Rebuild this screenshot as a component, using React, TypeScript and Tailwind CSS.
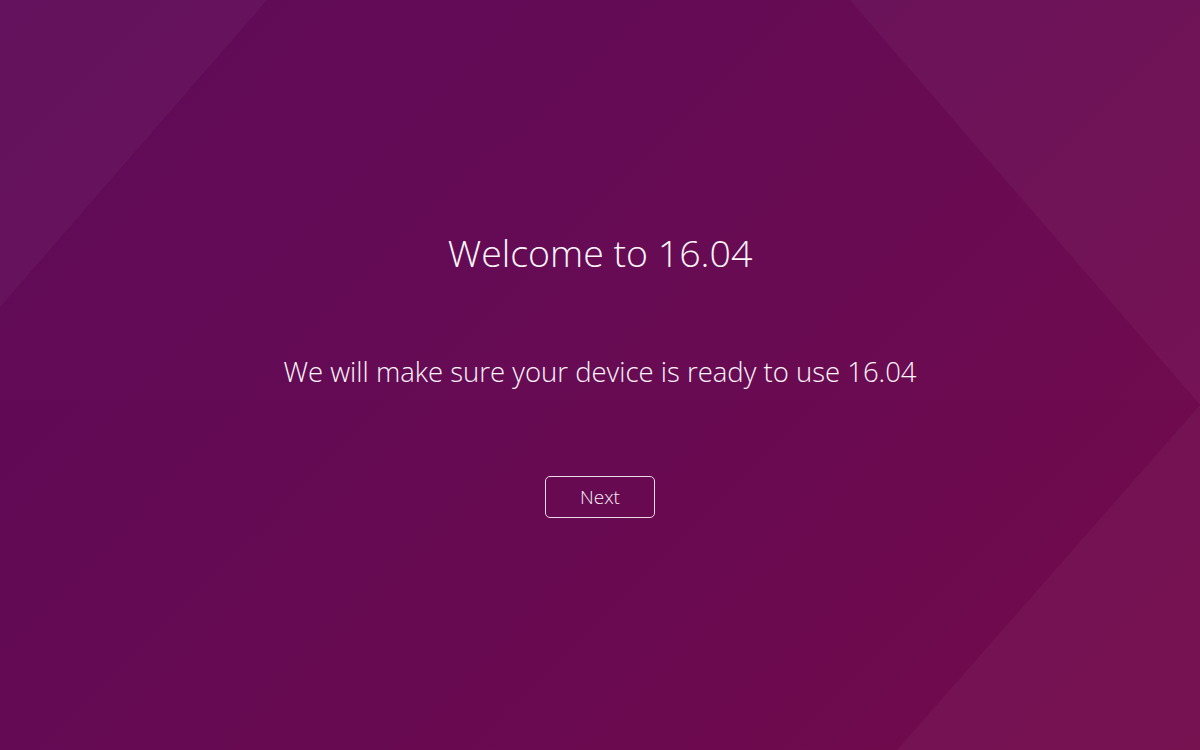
import React from "react";

export default function App() {
  return (
    <div className="relative w-[1200px] h-[750px] overflow-hidden bg-[linear-gradient(135deg,#5e0957_0%,#650a53_45%,#730a4b_100%)] font-['Open_Sans',sans-serif]">
      <svg
        className="absolute inset-0 w-full h-full"
        viewBox="0 0 1200 750"
        preserveAspectRatio="none"
      >
        <polygon points="0,0 267,0 0,307" fill="#ffffff" fillOpacity="0.035" />
        <polygon points="850,0 1200,0 1200,405" fill="#ffffff" fillOpacity="0.035" />
        <polygon points="1200,405 1200,750 897,750" fill="#ffffff" fillOpacity="0.035" />
        <rect x="0" y="0" width="1200" height="400" fill="#ffffff" fillOpacity="0.008" />
      </svg>
      <div className="relative flex flex-col items-center text-[#fbf6fa]">
        <h1 className="mt-[229px] text-[37.5px] leading-[48px] font-light">
          Welcome to 16.04
        </h1>
        <p className="mt-[79px] text-[27.5px] leading-[32px] font-light">
          We will make sure your device is ready to use 16.04
        </p>
        <button className="mt-[88px] w-[110px] h-[42px] rounded-[5px] border-[1.5px] border-[#eadbe6] text-[19px] font-light text-[#f6eef4] flex items-center justify-center">
          Next
        </button>
      </div>
    </div>
  );
}
